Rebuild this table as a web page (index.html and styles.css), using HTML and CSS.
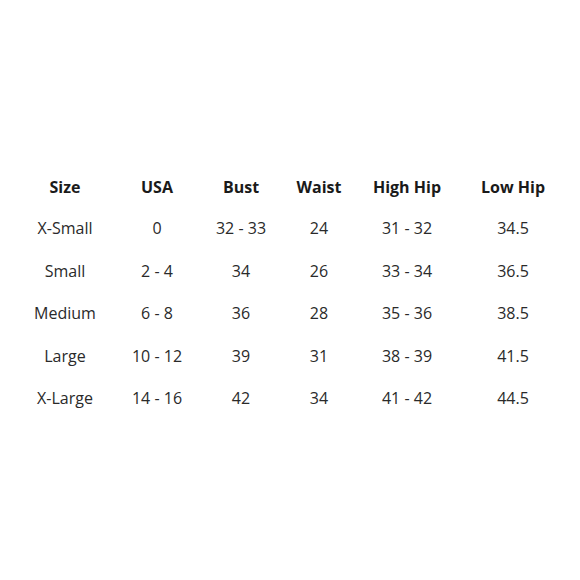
FILE: index.html
```html
<!DOCTYPE html>
<html lang="en">
<head>
<meta charset="utf-8">
<title>Size Chart</title>
<link rel="stylesheet" href="styles.css">
</head>
<body>
<div class="chart">
  <div class="row head">
    <div class="cell">Size</div><div class="cell">USA</div><div class="cell">Bust</div><div class="cell">Waist</div><div class="cell">High Hip</div><div class="cell">Low Hip</div>
  </div>
  <div class="row">
    <div class="cell">X-Small</div><div class="cell">0</div><div class="cell">32 - 33</div><div class="cell">24</div><div class="cell">31 - 32</div><div class="cell">34.5</div>
  </div>
  <div class="row">
    <div class="cell">Small</div><div class="cell">2 - 4</div><div class="cell">34</div><div class="cell">26</div><div class="cell">33 - 34</div><div class="cell">36.5</div>
  </div>
  <div class="row">
    <div class="cell">Medium</div><div class="cell">6 - 8</div><div class="cell">36</div><div class="cell">28</div><div class="cell">35 - 36</div><div class="cell">38.5</div>
  </div>
  <div class="row">
    <div class="cell">Large</div><div class="cell">10 - 12</div><div class="cell">39</div><div class="cell">31</div><div class="cell">38 - 39</div><div class="cell">41.5</div>
  </div>
  <div class="row">
    <div class="cell">X-Large</div><div class="cell">14 - 16</div><div class="cell">42</div><div class="cell">34</div><div class="cell">41 - 42</div><div class="cell">44.5</div>
  </div>
</div>
</body>
</html>
```

FILE: styles.css
```css
html, body {
  margin: 0;
  padding: 0;
  background: #ffffff;
}

body {
  font-family: "Open Sans", "Noto Sans", sans-serif;
  font-size: 16px;
  color: #2a2a2a;
}

.chart {
  padding-top: 166px;
  padding-left: 19px;
}

.row {
  display: grid;
  grid-template-columns: 92px 92px 76px 80px 96px 116px;
  height: 42.5px;
  align-items: center;
}

.row.head {
  height: 41px;
  font-weight: 700;
  color: #1a1a1a;
}

.cell {
  text-align: center;
  line-height: 42px;
  white-space: nowrap;
}
```
